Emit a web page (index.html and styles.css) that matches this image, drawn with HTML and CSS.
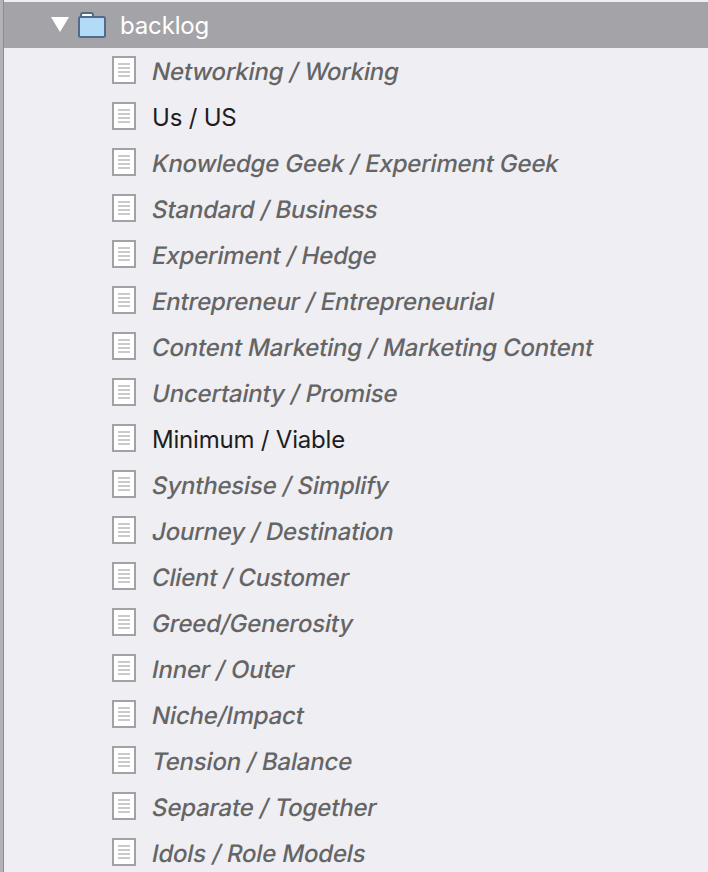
FILE: index.html
```html
<!DOCTYPE html>
<html lang="en">
<head>
    <meta charset="utf-8">
    <title>backlog</title>
    <link rel="stylesheet" href="styles.css">
</head>
<body>
    <svg width="0" height="0" class="defs">
        <symbol id="doc" viewBox="0 0 24 28">
            <rect x="1" y="1" width="22" height="26" fill="#fff" stroke="#a2a1a6" stroke-width="2"/>
            <path d="M6 8h12M6 12h12M6 16h12M6 20h12" stroke="#cacaca" stroke-width="2"/>
        </symbol>
    </svg>
    <div class="sidebar">
        <div class="folder-row">
            <svg class="arrow" width="18" height="15" viewBox="0 0 18 15"><path d="M0 0h18L9 15z" fill="#fff"/></svg>
            <svg class="folder" width="28" height="26" viewBox="0 0 28 26">
                <path d="M3 6V3Q3 1 5 1h8q2 0 2 2v3" fill="#fff" stroke="#536b88" stroke-width="2"/>
                <rect x="1" y="5" width="26" height="20" rx="1.5" fill="#b2daf9" stroke="#536b88" stroke-width="2"/>
            </svg>
            <span class="folder-name">backlog</span>
        </div>
        <ul class="docs">
            <li class="doc"><svg class="doc-icon"><use href="#doc"/></svg><span class="title">Networking / Working</span></li>
            <li class="doc written"><svg class="doc-icon"><use href="#doc"/></svg><span class="title">Us / US</span></li>
            <li class="doc"><svg class="doc-icon"><use href="#doc"/></svg><span class="title">Knowledge Geek / Experiment Geek</span></li>
            <li class="doc"><svg class="doc-icon"><use href="#doc"/></svg><span class="title">Standard / Business</span></li>
            <li class="doc"><svg class="doc-icon"><use href="#doc"/></svg><span class="title">Experiment / Hedge</span></li>
            <li class="doc"><svg class="doc-icon"><use href="#doc"/></svg><span class="title">Entrepreneur / Entrepreneurial</span></li>
            <li class="doc"><svg class="doc-icon"><use href="#doc"/></svg><span class="title">Content Marketing / Marketing Content</span></li>
            <li class="doc"><svg class="doc-icon"><use href="#doc"/></svg><span class="title">Uncertainty / Promise</span></li>
            <li class="doc written"><svg class="doc-icon"><use href="#doc"/></svg><span class="title">Minimum / Viable</span></li>
            <li class="doc"><svg class="doc-icon"><use href="#doc"/></svg><span class="title">Synthesise / Simplify</span></li>
            <li class="doc"><svg class="doc-icon"><use href="#doc"/></svg><span class="title">Journey / Destination</span></li>
            <li class="doc"><svg class="doc-icon"><use href="#doc"/></svg><span class="title">Client / Customer</span></li>
            <li class="doc"><svg class="doc-icon"><use href="#doc"/></svg><span class="title">Greed/Generosity</span></li>
            <li class="doc"><svg class="doc-icon"><use href="#doc"/></svg><span class="title">Inner / Outer</span></li>
            <li class="doc"><svg class="doc-icon"><use href="#doc"/></svg><span class="title">Niche/Impact</span></li>
            <li class="doc"><svg class="doc-icon"><use href="#doc"/></svg><span class="title">Tension / Balance</span></li>
            <li class="doc"><svg class="doc-icon"><use href="#doc"/></svg><span class="title">Separate / Together</span></li>
            <li class="doc"><svg class="doc-icon"><use href="#doc"/></svg><span class="title">Idols / Role Models</span></li>
        </ul>
    </div>
</body>
</html>
```
FILE: styles.css
```css
body {
    margin: 0;
    background-color: #efeef3;
    font-family: Inter, "Liberation Sans", sans-serif;
    font-size: 24px;
    overflow: hidden;
}
.defs {
    display: none;
}
.sidebar {
    box-sizing: border-box;
    height: 872px;
    padding-top: 2px;
    border-left: 3px solid #b3b2b4;
    box-shadow: inset 1px 0 #8b8a8e;
    overflow: hidden;
}
.folder-row {
    display: flex;
    align-items: flex-start;
    height: 46px;
    margin-left: 1px;
    background-color: #a4a3a8;
    color: #fff;
}
.arrow {
    margin: 15px 9px 0 47px;
}
.folder {
    margin-top: 10px;
}
.folder-name {
    margin-left: 14px;
    line-height: 48px;
    letter-spacing: -0.15px;
}
.docs {
    margin: 0;
    padding: 0 0 0 109px;
    list-style: none;
}
.doc {
    display: flex;
    height: 46px;
    color: #656565;
    line-height: 47px;
    letter-spacing: -0.2px;
    white-space: nowrap;
}
.doc-icon {
    flex: none;
    width: 24px;
    height: 28px;
    margin: 8px 16px 0 0;
}
/* slanted roman, keeps the two-storey "a" */
.title {
    font-weight: 450;
    transform: skewX(-11deg);
    transform-origin: 0 26px;
}
.written {
    color: #1d1d1f;
}
.written .title {
    font-weight: 430;
    letter-spacing: -0.2px;
    transform: none;
}
```
